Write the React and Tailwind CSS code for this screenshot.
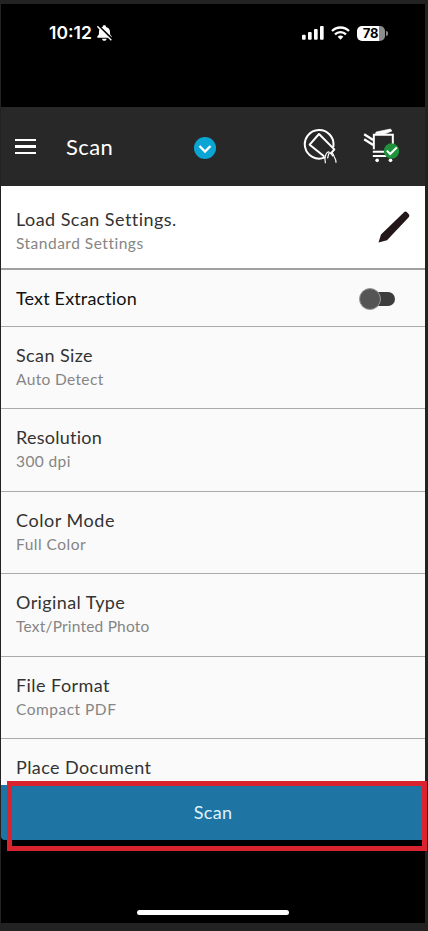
import { useState } from "react"
import clsx from "clsx"

const SETTINGS = [
  { title: "Scan Size", value: "Auto Detect", height: "h-[82px]", titleGap: "tracking-[0.4px]", valueGap: "tracking-[0.35px]" },
  { title: "Resolution", value: "300 dpi", height: "h-[83px]", titleGap: "tracking-[0.25px]", valueGap: "tracking-[0.4px]" },
  { title: "Color Mode", value: "Full Color", height: "h-[82px]", titleGap: "tracking-[0.55px]", valueGap: "tracking-[0.5px]" },
  { title: "Original Type", value: "Text/Printed Photo", height: "h-[83px]", titleGap: "tracking-[0.4px]", valueGap: "tracking-[0.2px]" },
  { title: "File Format", value: "Compact PDF", height: "h-[82px]", titleGap: "tracking-[0.45px]", valueGap: "tracking-[0.5px]" },
]

function SilentBell() {
  return (
    <svg viewBox="0 0 45 48" className="h-4 w-[15px]">
      <path d="M22 1c4 0 5 2 5 5 8 2 12 8 12 15 0 8 1 10 5 13v4H1v-4c4-3 5-5 5-13C6 12 10 7 17 6c0-3 1-5 5-5Z" fill="#fff" />
      <path d="M15 41h14c-1 4-3 6-7 6s-6-2-7-6Z" fill="#fff" />
      <path d="M3 1 45 42" stroke="#000" strokeWidth="6" />
      <path d="M1 4 43 46" stroke="#fff" strokeWidth="4" />
    </svg>
  )
}

function StatusBar() {
  return (
    <div className="flex h-[103px] items-start justify-between bg-black pt-[19px] pr-[37px] pl-[48px] font-['Inter',sans-serif]">
      <div className="flex h-5 items-center gap-[3px]">
        <span className="w-[45px] text-[17.500px] leading-5 font-semibold text-white">10:12</span>
        <SilentBell />
      </div>
      <div className="flex h-5 items-center">
        <svg viewBox="0 0 66 42" className="h-[14px] w-[22px]" fill="#fff">
          <rect x="0" y="26" width="11" height="15" rx="3" />
          <rect x="18" y="18" width="11" height="23" rx="3" />
          <rect x="36" y="9" width="11" height="32" rx="3" />
          <rect x="54" y="0" width="11" height="41" rx="3" />
        </svg>
        <svg viewBox="0 0 57 42" className="ml-[7px] h-[14px] w-[19px]" fill="none" stroke="#fff" strokeWidth="7">
          <path d="M3 15C17 1 40 1 54 15" />
          <path d="M12 25C21 16 36 16 45 25" />
          <path d="M20 32c5-5 12-5 17 0l-8.500 9Z" fill="#fff" stroke="none" />
        </svg>
        <div className="ml-[7px] flex h-[15px] w-[28px] items-center overflow-hidden rounded-[5px] bg-linear-to-r from-white from-78% to-[#8c8c8c] to-78%">
          <span className="w-full pr-px text-center text-[13px] leading-[15px] font-bold tracking-[-0.2px] text-black">78</span>
        </div>
        <div className="ml-px h-[5px] w-[2px] rounded-r-full bg-[#8c8c8c]" />
      </div>
    </div>
  )
}

function TouchCardIcon() {
  return (
    <svg viewBox="0 0 105 108" className="h-9 w-[35px]" fill="none" stroke="#fff" strokeLinejoin="round" strokeLinecap="round">
      <path d="M64 89A43 43 0 1 1 91 55" strokeWidth="6" />
      <path d="M62 84 20 50 48 18 94 64 84 76" strokeWidth="6" />
      <path d="M67 104c0-6-2-9-1-14 1-8 4-15 9-18 4-1 5 3 2 6l-3 12M79 75c5 0 7 4 10 9M84 74c6-1 8 8 10 13 3 5 5 10 5 16" strokeWidth="3.500" />
    </svg>
  )
}

function PrinterIcon() {
  return (
    <svg viewBox="0 0 110 105" className="h-[35px] w-[37px]" fill="none" stroke="#fff" strokeWidth="6">
      <path d="M32 64V20H89V50" strokeWidth="6" />
      <path d="M37 17 39 12 82 3l4 6-22 9Z" fill="#fff" strokeWidth="2" />
      <path d="M3 19 30 36M3 34 30 51" strokeWidth="7" />
      <path d="M29 71H65M29 84H88" />
      <circle cx="42" cy="97" r="5.500" fill="#fff" stroke="none" />
      <circle cx="82" cy="97" r="5.500" fill="#fff" stroke="none" />
      <circle cx="85" cy="69" r="23" fill="#20923d" stroke="none" />
      <path d="m71 68 10 10 20-20" strokeWidth="6" />
    </svg>
  )
}

function Header() {
  return (
    <header className="flex h-[79px] items-center bg-[#282828] pt-[2px] pl-[14px]">
      <button className="mb-[2px] flex w-[21px] flex-col gap-[4px]" aria-label="Menu">
        <span className="h-[2px] w-full bg-white" />
        <span className="h-[3px] w-full bg-white" />
        <span className="h-[2px] w-full bg-white" />
      </button>
      <h1 className="mb-[2px] ml-[30px] w-[128px] text-[22px] leading-7 tracking-[0.4px] text-white">Scan</h1>
      <svg viewBox="0 0 22 22" className="size-[22px]">
        <circle cx="11" cy="11" r="11" fill="#0ba5d3" />
        <path d="m5.500 9 5.500 5.500L16.500 9" fill="none" stroke="#fff" strokeWidth="2.300" />
      </svg>
      <div className="mb-[3px] ml-[87px] flex gap-[25px]">
        <TouchCardIcon />
        <PrinterIcon />
      </div>
    </header>
  )
}

function SettingText({ title, value, titleGap, valueGap }) {
  return (
    <div>
      <p className={clsx("text-[18px] leading-6 text-[#333]", titleGap)}>{title}</p>
      {value && <p className={clsx("text-[15.500px] leading-6 text-[#858585]", valueGap)}>{value}</p>}
    </div>
  )
}

function TextExtraction() {
  const [enabled, setEnabled] = useState(false)

  return (
    <div className="flex h-[57px] items-center justify-between border-b border-[#aaa] pr-[30px] pl-[15px]">
      <p className="text-[18px] leading-6 tracking-[0.15px] text-[#111]">Text Extraction</p>
      <button
        role="switch"
        aria-checked={enabled}
        aria-label="Text Extraction"
        onClick={() => setEnabled(!enabled)}
        className={clsx("mt-px flex h-[22px] w-[36px] items-center", enabled && "-scale-x-100")}
      >
        <span className="z-10 size-[22px] shrink-0 rounded-full border border-[#999] bg-[#555]" />
        <span className="-ml-[6px] h-[14px] w-[20px] rounded-r-full bg-[#3d3d3d]" />
      </button>
    </div>
  )
}

export default function App() {
  return (
    <div className="h-[931px] w-[428px] bg-[#222] pt-[4px] pr-[3px] pl-px font-['Lato',sans-serif]">
      <div className="flex h-[919px] flex-col bg-black">
        <StatusBar />
        <Header />

        <div className="flex h-[84px] items-start justify-between border-b-2 border-[#a0a0a0] bg-white pt-[21px] pr-[15px] pl-[15px]">
          <SettingText
            title="Load Scan Settings."
            value="Standard Settings"
            titleGap="tracking-[0.45px]"
            valueGap="tracking-[0.5px]"
          />
          <svg viewBox="0 0 32 32" className="mt-[4px] size-8" fill="#231719">
            <path d="M.5 31.500 3 23.500 26 1.200Q27.500 0 29 1.200L31 3.500Q32 5 30.500 6.500L9 29.300Z" />
          </svg>
        </div>

        <main className="h-[515px] overflow-hidden bg-[#fafafa]">
          <TextExtraction />
          {SETTINGS.map((item) => (
            <div key={item.title} className={clsx("border-b border-[#aaa] pt-4 pl-[15px]", item.height)}>
              <SettingText {...item} />
            </div>
          ))}
          <div className="pt-4 pl-[15px]">
            <SettingText title="Place Document" titleGap="tracking-[0.42px]" />
          </div>
        </main>

        <div className="relative h-[55px]">
          <button className="h-full w-full rounded-b-[4px] bg-[#1e75a3] text-[18px] tracking-[0.3px] text-[#dff3fb]">
            Scan
          </button>
          <div className="pointer-events-none absolute -top-[4px] -right-[2px] left-[6px] h-[70px] border-5 border-[#d9232e]" />
        </div>

        <div className="mx-auto mt-[70px] h-[5px] w-[152px] rounded-full bg-white" />
      </div>
    </div>
  )
}
